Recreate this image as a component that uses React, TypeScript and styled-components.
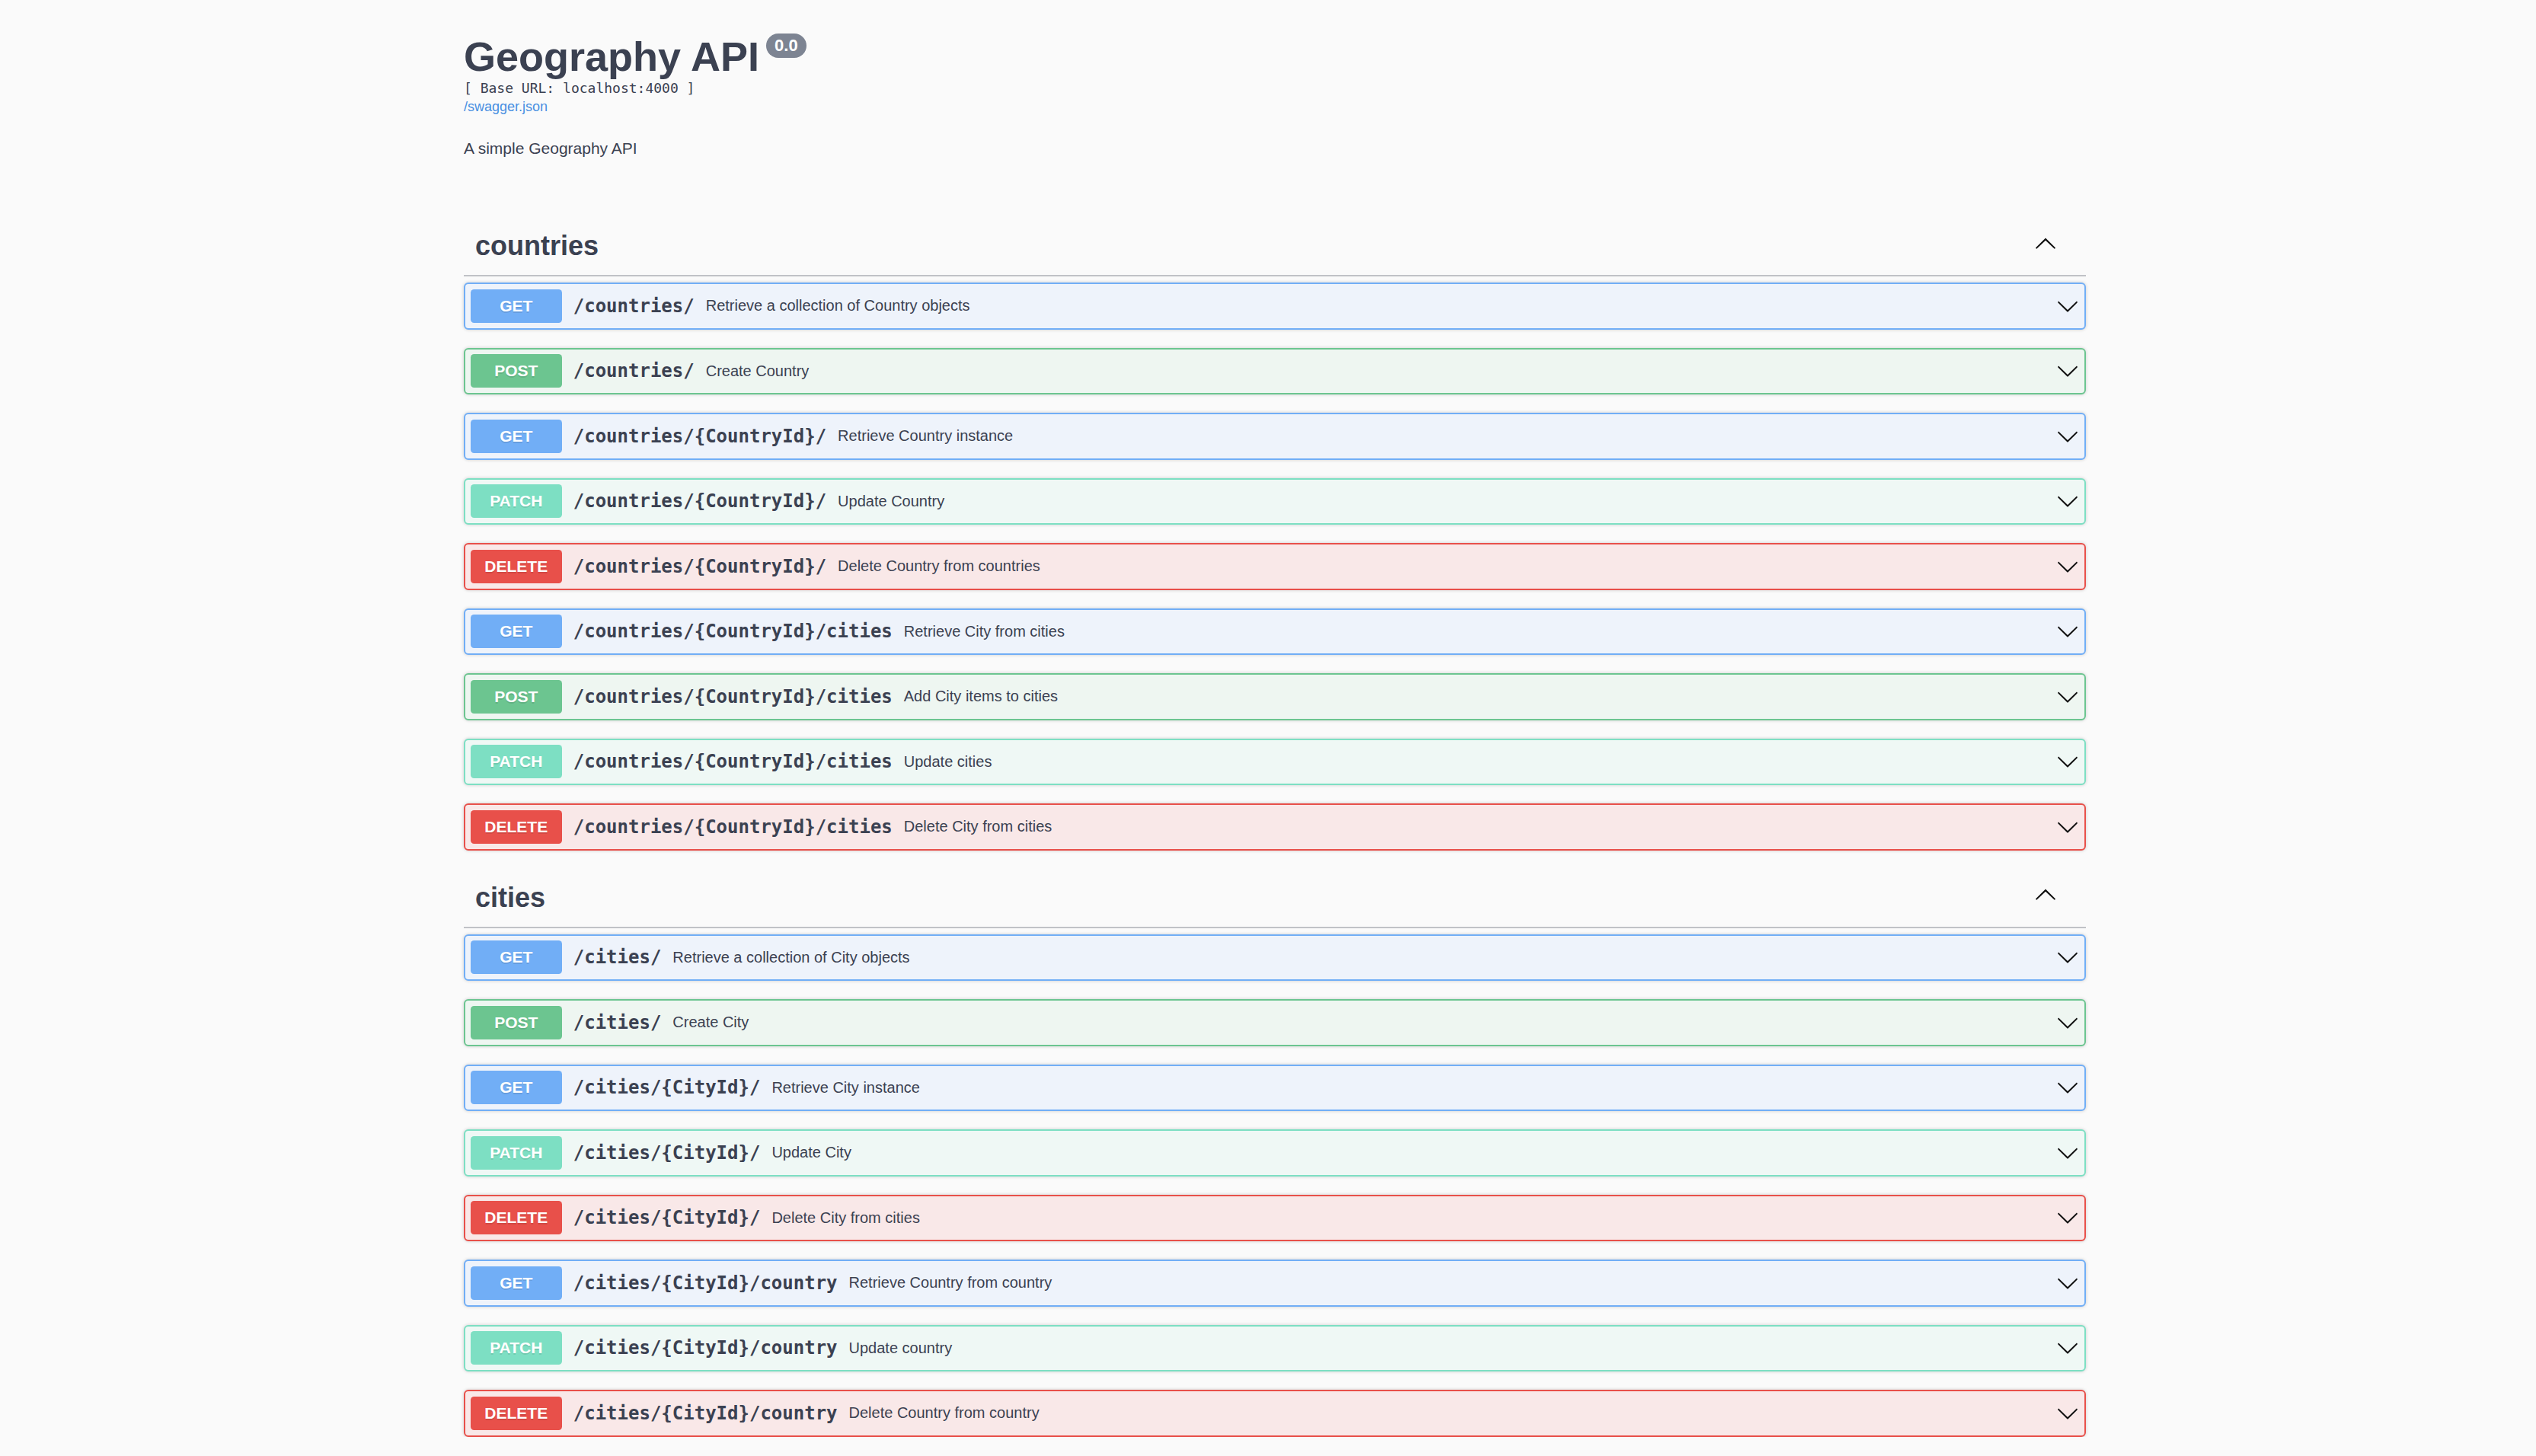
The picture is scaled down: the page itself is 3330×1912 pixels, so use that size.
import React from "react";
import styled, { createGlobalStyle } from "styled-components";

type Method = "GET" | "POST" | "PATCH" | "DELETE";

const palette: Record<Method, { main: string; bg: string }> = {
  GET: { main: "#71aef6", bg: "#eef3fb" },
  POST: { main: "#6cc590", bg: "#eef6f1" },
  PATCH: { main: "#7ddfc3", bg: "#eff8f5" },
  DELETE: { main: "#e8504a", bg: "#f9e8e8" },
};

const GlobalStyle = createGlobalStyle`
  html, body {
    margin: 0;
    padding: 0;
    background: #fafafa;
    font-family: "Liberation Sans", Arial, sans-serif;
    color: #3b4151;
  }
`;

const Page = styled.div`
  padding: 43px 0 0 18px;
`;

const Wrapper = styled.div`
  width: 2130px;
  margin: 0 auto;
`;

const TitleRow = styled.div`
  display: flex;
  align-items: flex-start;
`;

const Title = styled.h2`
  margin: 0;
  font-family: "Liberation Sans", Arial, sans-serif;
  font-weight: 700;
  font-size: 54px;
  line-height: 62px;
  color: #3b4151;
`;

const Version = styled.span`
  margin: 1px 0 0 9px;
  padding: 3px 11px;
  border-radius: 60px;
  background: #7d8492;
  color: #fff;
  font-family: "Liberation Sans", Arial, sans-serif;
  font-weight: 700;
  font-size: 22px;
  line-height: 26px;
`;

const BaseUrl = styled.pre`
  margin: 0;
  font-family: "DejaVu Sans Mono", monospace;
  font-weight: 400;
  font-size: 18px;
  line-height: 21px;
  color: #3b4151;
`;

const SpecLink = styled.a`
  display: block;
  margin-top: 4px;
  font-family: "Liberation Sans", Arial, sans-serif;
  font-size: 18px;
  line-height: 21px;
  color: #4990e2;
  text-decoration: none;
`;

const Description = styled.p`
  margin: 32px 0 0;
  font-size: 21px;
  line-height: 24px;
  color: #3b4151;
`;

const Sections = styled.div`
  margin-top: 78px;
  display: flex;
  flex-direction: column;
`;

const TagSection = styled.section`
  display: flex;
  flex-direction: column;
`;

const TagHeading = styled.h3`
  display: flex;
  align-items: center;
  min-height: 46px;
  margin: 0 0 8px;
  padding: 15px 38px 15px 15px;
  border-bottom: 2px solid rgba(59, 65, 81, 0.3);
  font-family: "Liberation Sans", Arial, sans-serif;
  font-weight: 700;
  font-size: 36px;
  color: #3b4151;
`;

const TagName = styled.span`
  flex: 1;
`;

const Arrow = styled.svg`
  width: 30px;
  height: 30px;
  flex: none;
  fill: #111;
`;

const HeadingArrow = styled(Arrow)`
  margin-bottom: 9px;
`;

const Opblock = styled.div<{ $method: Method }>`
  display: flex;
  align-items: center;
  padding: 6.75px;
  margin: 0 0 24px;
  border: 2px solid ${(p) => palette[p.$method].main};
  border-radius: 6px;
  background: ${(p) => palette[p.$method].bg};
  box-shadow: 0 0 4.5px rgba(0, 0, 0, 0.19);

  ${TagSection}:last-child &:last-child {
    margin-bottom: 0;
  }
`;

const MethodBadge = styled.span<{ $method: Method }>`
  box-sizing: border-box;
  min-width: 120px;
  padding: 9px 0;
  border-radius: 4.5px;
  background: ${(p) => palette[p.$method].main};
  color: #fff;
  text-align: center;
  font-family: "Liberation Sans", Arial, sans-serif;
  font-weight: 700;
  font-size: 21px;
  line-height: 26px;
  text-shadow: 0 1.5px 0 rgba(0, 0, 0, 0.1);
`;

const PathText = styled.span`
  padding: 0 15px;
  font-family: "DejaVu Sans Mono", monospace;
  font-weight: 700;
  font-size: 24px;
  color: #3b4151;
`;

const SummaryText = styled.span`
  flex: 1 1 auto;
  font-family: "Liberation Sans", Arial, sans-serif;
  font-size: 20px;
  color: #3b4151;
`;

const DownArrow = () => (
  <Arrow viewBox="0 0 20 20" aria-hidden="true">
    <path d="M17.418 6.109c.272-.268.709-.268.979 0s.271.701 0 .969l-7.908 7.83c-.27.268-.707.268-.979 0l-7.908-7.83c-.27-.268-.27-.701 0-.969.271-.268.709-.268.979 0L10 13.25l7.418-7.141z" />
  </Arrow>
);

const UpArrow = () => (
  <HeadingArrow viewBox="0 0 20 20" aria-hidden="true">
    <path d="M17.418 14.908c.272.268.709.268.979 0s.271-.701 0-.969l-7.908-7.83c-.27-.268-.707-.268-.979 0l-7.908 7.83c-.27.268-.27.701 0 .969.271.268.709.268.979 0L10 7.767l7.418 7.141z" />
  </HeadingArrow>
);

type Op = { method: Method; path: string; summary: string };

const tags: { name: string; ops: Op[] }[] = [
  {
    name: "countries",
    ops: [
      { method: "GET", path: "/countries/", summary: "Retrieve a collection of Country objects" },
      { method: "POST", path: "/countries/", summary: "Create Country" },
      { method: "GET", path: "/countries/{CountryId}/", summary: "Retrieve Country instance" },
      { method: "PATCH", path: "/countries/{CountryId}/", summary: "Update Country" },
      { method: "DELETE", path: "/countries/{CountryId}/", summary: "Delete Country from countries" },
      { method: "GET", path: "/countries/{CountryId}/cities", summary: "Retrieve City from cities" },
      { method: "POST", path: "/countries/{CountryId}/cities", summary: "Add City items to cities" },
      { method: "PATCH", path: "/countries/{CountryId}/cities", summary: "Update cities" },
      { method: "DELETE", path: "/countries/{CountryId}/cities", summary: "Delete City from cities" },
    ],
  },
  {
    name: "cities",
    ops: [
      { method: "GET", path: "/cities/", summary: "Retrieve a collection of City objects" },
      { method: "POST", path: "/cities/", summary: "Create City" },
      { method: "GET", path: "/cities/{CityId}/", summary: "Retrieve City instance" },
      { method: "PATCH", path: "/cities/{CityId}/", summary: "Update City" },
      { method: "DELETE", path: "/cities/{CityId}/", summary: "Delete City from cities" },
      { method: "GET", path: "/cities/{CityId}/country", summary: "Retrieve Country from country" },
      { method: "PATCH", path: "/cities/{CityId}/country", summary: "Update country" },
      { method: "DELETE", path: "/cities/{CityId}/country", summary: "Delete Country from country" },
    ],
  },
];

export default function App() {
  return (
    <>
      <GlobalStyle />
      <Page>
        <Wrapper>
          <header>
            <TitleRow>
              <Title>Geography API</Title>
              <Version>0.0</Version>
            </TitleRow>
            <BaseUrl>[ Base URL: localhost:4000 ]</BaseUrl>
            <SpecLink href="#">/swagger.json</SpecLink>
            <Description>A simple Geography API</Description>
          </header>
          <Sections>
            {tags.map((tag) => (
              <TagSection key={tag.name}>
                <TagHeading>
                  <TagName>{tag.name}</TagName>
                  <UpArrow />
                </TagHeading>
                {tag.ops.map((op, i) => (
                  <Opblock key={i} $method={op.method}>
                    <MethodBadge $method={op.method}>{op.method}</MethodBadge>
                    <PathText>{op.path}</PathText>
                    <SummaryText>{op.summary}</SummaryText>
                    <DownArrow />
                  </Opblock>
                ))}
              </TagSection>
            ))}
          </Sections>
        </Wrapper>
      </Page>
    </>
  );
}
